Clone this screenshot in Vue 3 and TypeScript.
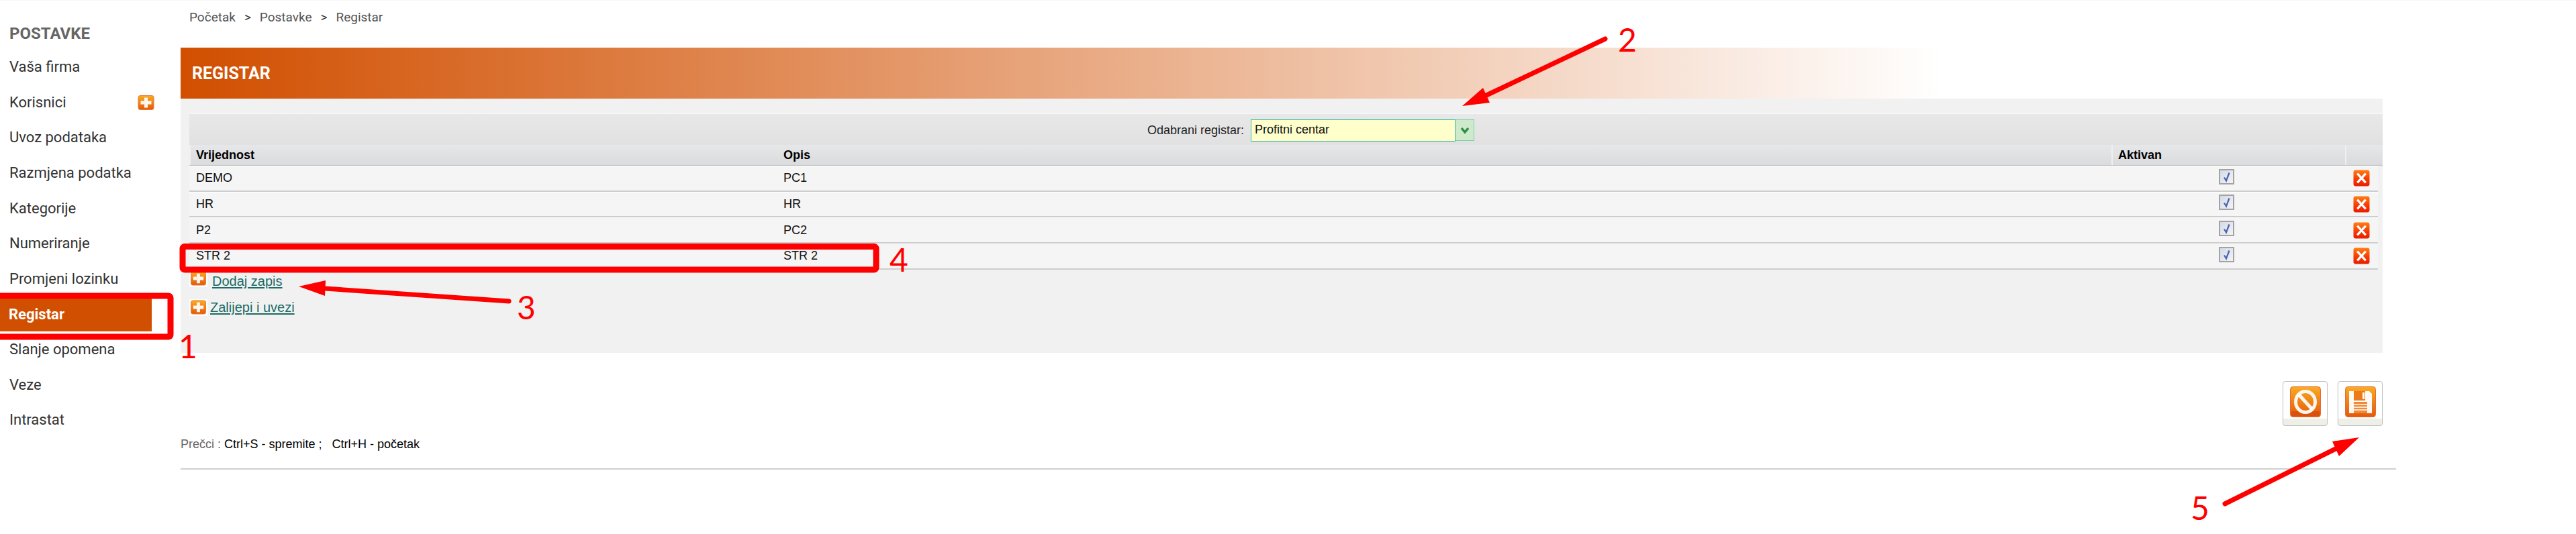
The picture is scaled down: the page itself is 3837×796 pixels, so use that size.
<template>
  <div class="page">
    <svg class="defs" width="0" height="0" aria-hidden="true">
      <defs>
        <linearGradient id="orange" x1="0" y1="0" x2="0" y2="1">
          <stop offset="0" stop-color="#fbab22" />
          <stop offset="1" stop-color="#e4590b" />
        </linearGradient>
        <linearGradient id="red" x1="0" y1="0" x2="0" y2="1">
          <stop offset="0" stop-color="#ff7f14" />
          <stop offset="0.55" stop-color="#f63c04" />
          <stop offset="1" stop-color="#ea1c00" />
        </linearGradient>
        <linearGradient id="box" x1="0" y1="0" x2="1" y2="1">
          <stop offset="0" stop-color="#d3d9e6" />
          <stop offset="1" stop-color="#f3f4f6" />
        </linearGradient>
        <symbol id="icon-plus" viewBox="0 0 24 22">
          <rect x="0.5" y="0.5" width="23" height="21" rx="3" fill="url(#orange)" stroke="#e7793a" />
          <path d="M9.5 3.5h5v5h5.500v5h-5.500v5h-5v-5h-5.500v-5h5.500z" fill="#fff" fill-opacity="0.93" />
        </symbol>
        <symbol id="icon-remove" viewBox="0 0 24 24">
          <rect x="0.5" y="0.5" width="23" height="23" rx="3" fill="url(#red)" />
          <path d="M6 5.500l12 13M18 5.500l-12 13" stroke="#fff" stroke-width="3.200" fill="none" />
        </symbol>
        <symbol id="icon-check" viewBox="0 0 23 23">
          <rect x="1" y="1" width="21" height="21" fill="url(#box)" stroke="#a3a3a3" stroke-width="2" />
          <path d="M8 12.500l3 5 4.500-12" stroke="#4a62ae" stroke-width="2.200" fill="none" />
        </symbol>
        <symbol id="icon-cancel" viewBox="0 0 46 46">
          <rect x="0.500" y="0.500" width="45" height="45" rx="4" fill="url(#orange)" stroke="#e2693c" />
          <rect x="2" y="37" width="42" height="7" fill="#d9520a" />
          <ellipse cx="23" cy="23" rx="14.500" ry="15.500" fill="none" stroke="#fff" stroke-opacity="0.93" stroke-width="5" />
          <path d="M13 12l20 22" stroke="#fff" stroke-opacity="0.93" stroke-width="5" />
        </symbol>
        <symbol id="icon-save" viewBox="0 0 46 46">
          <rect x="0.500" y="0.500" width="45" height="45" rx="4" fill="url(#orange)" stroke="#e2693c" />
          <path d="M6 7h30l4 4v29h-34z" fill="#fff" fill-opacity="0.95" />
          <rect x="13" y="7" width="17" height="14" fill="#ec7a1a" />
          <rect x="26" y="9" width="3" height="10" fill="#fff" />
          <rect x="13" y="23" width="20" height="17" fill="#f08a36" />
          <path d="M13 27h20M13 31h20M13 35h20" stroke="#fff" stroke-width="1.500" />
        </symbol>
      </defs>
    </svg>

    <aside class="sidebar">
      <h2 class="side-title">POSTAVKE</h2>
      <nav>
        <a
          v-for="item in menu"
          :key="item"
          class="side-item"
          :class="{ active: item === 'Registar' }"
        >
          {{ item }}
          <svg v-if="item === 'Korisnici'" class="side-plus"><use href="#icon-plus" /></svg>
        </a>
      </nav>
    </aside>

    <main class="content">
      <div class="crumbs">
        <span>Početak</span><b>&gt;</b><span>Postavke</span><b>&gt;</b><span>Registar</span>
      </div>
      <h1 class="title">REGISTAR</h1>

      <section class="panel">
        <div class="toolbar">
          <label>Odabrani registar:</label>
          <div class="select">
            <div class="select-value">Profitni centar</div>
            <div class="select-arrow">
              <svg width="14" height="14" viewBox="0 0 14 14">
                <path d="M2 4l5 6 5-6" fill="none" stroke="#2f8f45" stroke-width="3.500" />
              </svg>
            </div>
          </div>
        </div>

        <div class="grid head">
          <div class="cell">Vrijednost</div>
          <div class="cell">Opis</div>
          <div class="cell">Aktivan</div>
          <div class="cell"></div>
        </div>
        <div v-for="row in rows" :key="row.value" class="grid row">
          <div class="cell">{{ row.value }}</div>
          <div class="cell">{{ row.label }}</div>
          <div class="cell center"><svg class="check"><use href="#icon-check" /></svg></div>
          <div class="cell center"><svg class="remove"><use href="#icon-remove" /></svg></div>
        </div>

        <div class="links">
          <div class="link first">
            <span class="link-icon"><svg><use href="#icon-plus" /></svg></span>
            <a>Dodaj zapis</a>
          </div>
          <div class="link">
            <span class="link-icon"><svg><use href="#icon-plus" /></svg></span>
            <a>Zalijepi i uvezi</a>
          </div>
        </div>
      </section>

      <div class="actions">
        <button type="button"><svg><use href="#icon-cancel" /></svg></button>
        <button type="button"><svg><use href="#icon-save" /></svg></button>
      </div>

      <p class="shortcuts">
        <span>Prečci : </span>Ctrl+S - spremite ;&nbsp;&nbsp; Ctrl+H - početak
      </p>
      <hr />
    </main>

    <svg class="marks" width="3837" height="796">
      <rect x="-5" y="441" width="259" height="61" rx="3" />
      <rect x="272" y="367.500" width="1033" height="34.500" rx="3" />
      <g v-for="arrow in arrows" :key="arrow.head">
        <line :x1="arrow.tail[0]" :y1="arrow.tail[1]" :x2="arrow.base[0]" :y2="arrow.base[1]" />
        <polygon :points="arrow.head" />
      </g>
      <text v-for="mark in numbers" :key="mark.label" :x="mark.x" :y="mark.y">{{ mark.label }}</text>
    </svg>
  </div>
</template>

<script setup lang="ts">
interface RegisterRow {
  value: string
  label: string
}

const menu = [
  'Vaša firma',
  'Korisnici',
  'Uvoz podataka',
  'Razmjena podatka',
  'Kategorije',
  'Numeriranje',
  'Promjeni lozinku',
  'Registar',
  'Slanje opomena',
  'Veze',
  'Intrastat'
]

const rows: RegisterRow[] = [
  { value: 'DEMO', label: 'PC1' },
  { value: 'HR', label: 'HR' },
  { value: 'P2', label: 'PC2' },
  { value: 'STR 2', label: 'STR 2' }
]

// annotations drawn on top of the screenshot
const arrows = [
  { tail: [2391, 58], base: [2214, 142], head: '2178,158 2209,131 2219,153' },
  { tail: [758, 449], base: [484, 430], head: '445,427 485,418 484,441' },
  { tail: [3314, 751], base: [3479, 669], head: '3514,652 3474,658 3484,680' }
]

const numbers = [
  { label: '1', x: 266, y: 534 },
  { label: '2', x: 2410, y: 77 },
  { label: '3', x: 770, y: 476 },
  { label: '4', x: 1325, y: 405 },
  { label: '5', x: 3263, y: 775 }
]
</script>

<style>
html,
body {
  margin: 0;
  background: #fff;
}
</style>

<style scoped>
.page {
  position: relative;
  display: flex;
  width: 3837px;
  height: 796px;
  overflow: hidden;
  background: #fff;
  border-top: 1px solid #f6f6f6;
  box-sizing: border-box;
  font-family: "Liberation Sans", Arial, sans-serif;
  font-size: 18px;
  color: #111;
}

.defs {
  position: absolute;
}

.sidebar {
  width: 269px;
  flex: none;
  font-family: Roboto, sans-serif;
}

.side-title {
  margin: 0;
  padding: 35px 0 0 14px;
  height: 38px;
  font-size: 24px;
  line-height: 28px;
  font-weight: 700;
  color: #666;
}

.side-item {
  position: relative;
  display: block;
  width: 226px;
  height: 52.65px;
  padding-left: 14px;
  box-sizing: border-box;
  font-size: 22px;
  line-height: 52.65px;
  color: #333;
}

.side-item.active {
  height: 50px;
  margin: 1.3px 0;
  padding-left: 13px;
  line-height: 50px;
  background: #d14f00;
  color: #fff;
  font-weight: 700;
}

.side-plus {
  position: absolute;
  left: 205px;
  top: 15px;
  width: 25px;
  height: 22px;
}

.content {
  width: 3300px;
  flex: none;
}

.crumbs {
  display: flex;
  align-items: center;
  gap: 13px;
  height: 70px;
  padding: 0 0 22px 13px;
  box-sizing: border-box;
  font-family: Roboto, sans-serif;
  font-size: 19px;
  color: #555;
}

.crumbs b {
  font-weight: 400;
  color: #333;
}

.title {
  margin: 0;
  width: 3280px;
  height: 76px;
  padding-left: 17px;
  box-sizing: border-box;
  background: linear-gradient(to right, #d14f00, #fff 80%);
  font-family: Roboto, sans-serif;
  font-size: 25px;
  line-height: 78px;
  font-weight: 700;
  color: #fff;
}

.panel {
  width: 3280px;
  height: 379px;
  padding: 21px 0 0 13px;
  box-sizing: border-box;
  background: #f1f1f1;
}

.toolbar {
  display: flex;
  align-items: flex-start;
  justify-content: center;
  gap: 10px;
  height: 48px;
  padding: 8px 0 0 0;
  box-sizing: border-box;
  border-top: 2px solid #f6f6f6;
  background: linear-gradient(#e8e8e8, #e1e1e1);
}

.toolbar label {
  margin-left: 74px;
  line-height: 33px;
  color: #222;
}

.select {
  display: flex;
  width: 333px;
}

.select-value {
  width: 305px;
  height: 33px;
  padding-left: 5px;
  box-sizing: border-box;
  border: 1px solid #3cb89b;
  background: #ffffcc;
  line-height: 28px;
}

.select-arrow {
  display: flex;
  align-items: center;
  justify-content: center;
  width: 28px;
  height: 32px;
  box-sizing: border-box;
  border: 1px solid #7fcfae;
  border-left: 0;
  background: #cdebcb;
}

.grid {
  display: grid;
  grid-template-columns: 876px 1987px 348px 51px;
  align-items: center;
}

.head {
  height: 31px;
  border-bottom: 1px solid #bdbdbd;
  box-sizing: border-box;
  background: linear-gradient(#e6e7e8, #dadbdd);
  font-weight: 700;
  color: #000;
}

.head .cell {
  height: 100%;
  line-height: 30px;
  padding-left: 8px;
  box-sizing: border-box;
  border-left: 2px solid #f0f0f0;
}

.head .cell:nth-child(2) {
  padding-left: 9px;
  border-left: 0;
}

.row {
  width: 3260px;
  height: 38.67px;
  box-sizing: border-box;
  border-top: 1px solid #fff;
  border-bottom: 2px solid #cdcdcd;
  background: #f5f5f5;
}

.row .cell {
  padding-left: 10px;
}

.row .cell:nth-child(2) {
  padding-left: 9px;
}

.row .center {
  display: flex;
  justify-content: center;
  padding-left: 0;
}

.check {
  width: 23px;
  height: 23px;
  margin: -5px 5px 0 0;
}

.remove {
  width: 25px;
  height: 25px;
  margin-right: 2px;
}

.links {
  margin-top: 1px;
  font-size: 20px;
}

.link {
  display: flex;
  align-items: center;
  gap: 4px;
  height: 25px;
  margin-top: 15px;
}

.link.first {
  align-items: flex-end;
  gap: 7px;
  margin-top: 0;
  height: 28px;
}

.link a {
  color: #1b6b66;
  text-decoration: underline;
  text-underline-offset: 2px;
}

.link-icon {
  display: flex;
  align-items: center;
  justify-content: center;
  width: 27px;
  height: 25px;
  background: #fff;
}

.link.first .link-icon {
  margin-bottom: 3px;
}

.link-icon svg {
  width: 23px;
  height: 22px;
}

.actions {
  display: flex;
  justify-content: flex-end;
  gap: 15px;
  width: 3280px;
  margin-top: 42px;
}

.actions button {
  display: flex;
  justify-content: center;
  width: 67px;
  height: 67px;
  padding: 7px 0 0;
  box-sizing: border-box;
  border: 1px solid #bcbcbc;
  border-radius: 4px;
  background: linear-gradient(#fff 85%, #eef0e8 85%);
}

.actions svg {
  width: 46px;
  height: 46px;
}

.shortcuts {
  margin: 16px 0 0;
  font-size: 18px;
  line-height: 22px;
  color: #000;
}

.shortcuts span {
  color: #666;
}

hr {
  margin: 25px 0 0;
  border: 0;
  border-top: 2px solid #cfcfcf;
}

.marks {
  position: absolute;
  left: 0;
  top: -1px;
  pointer-events: none;
}

.marks rect {
  fill: none;
  stroke: #f00;
  stroke-width: 9;
}

.marks line {
  stroke: #f00;
  stroke-width: 7;
  stroke-linecap: round;
}

.marks polygon {
  fill: #f00;
}

.marks text {
  font-family: Lato, sans-serif;
  font-size: 48px;
  fill: #f00;
}
</style>
